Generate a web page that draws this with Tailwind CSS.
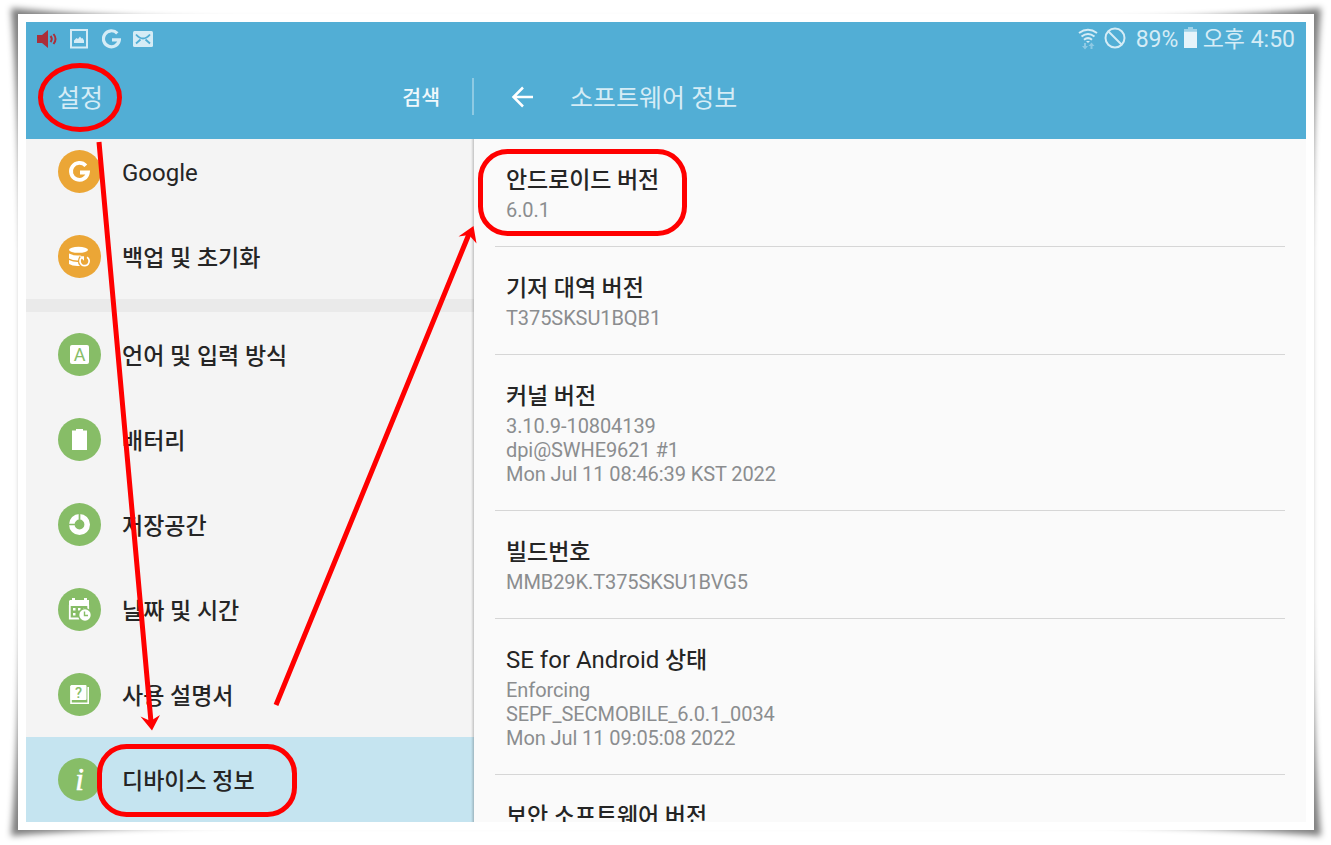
<!doctype html>
<html lang="ko">
    <head>
        <meta charset="UTF-8" />
        <meta name="viewport" content="width=device-width, initial-scale=1.0" />
        <title>소프트웨어 정보</title>
        <script src="https://cdn.jsdelivr.net/npm/@tailwindcss/browser@4"></script>
    </head>
    <body class="relative h-[845px] w-[1331px] overflow-hidden bg-white px-[18px] py-[14px] font-['Roboto','Noto_Sans_CJK_KR',sans-serif]">
        <!-- lifted corner shadow -->
        <svg class="absolute left-0 top-0" width="1331" height="845" viewBox="0 0 1331 845">
            <defs>
                <filter id="soft" x="-5%" y="-5%" width="110%" height="110%">
                    <feGaussianBlur stdDeviation="3.2" />
                </filter>
            </defs>
            <path
                d="M11 8Q100 17 240 20H1090Q1230 17 1321 8Q1313 110 1311 250V600Q1313 740 1321 836Q1230 828 1090 824H240Q100 828 11 836Q19 740 21 600V250Q19 110 11 8Z"
                fill="#000"
                fill-opacity="0.5"
                filter="url(#soft)"
            />
        </svg>

        <div class="relative h-[816px] w-[1296px] bg-white p-2">
            <div class="flex h-[800px] w-[1280px] flex-col overflow-hidden bg-[#fafafa]">
                <header class="h-[117px] shrink-0 bg-[#52aed5] text-[#d5ecf6]">
                    <!-- status bar -->
                    <div class="flex h-[33px] items-center justify-between pl-[10px] pr-[11px]">
                        <div class="flex items-center gap-3">
                            <svg width="22" height="20" viewBox="0 0 22 20">
                                <path d="M1 6h5l6-5v18l-6-5H1z" fill="#ab2f3a" />
                                <path d="M14.5 7q2.500 3 0 6M17.500 5q4 5 0 10" fill="none" stroke="#ab2f3a" stroke-width="2" />
                            </svg>
                            <svg width="18" height="20" viewBox="0 0 18 20">
                                <path d="M1 1h16v17.5H1z" fill="none" stroke="currentColor" stroke-width="2" />
                                <path d="M4 14v-2.500l2.500-2.500 1.500 1 2-2.500 1.500 2 1-.500L14 11.500V14z" fill="currentColor" />
                            </svg>
                            <svg class="ml-0.5" width="19" height="20" viewBox="0 0 19 20">
                                <path d="M15.300 4.300A8 8 0 1 0 17.400 10.800H10" fill="none" stroke="currentColor" stroke-width="3.200" />
                            </svg>
                            <svg width="20" height="16" viewBox="0 0 20 16">
                                <rect width="20" height="16" rx="1.5" fill="currentColor" />
                                <path d="M3 3.500Q10 11.500 17 3.500M3 12.500L7.500 8.500M17 12.500L12.500 8.500" fill="none" stroke="#52aed5" stroke-width="1.800" />
                            </svg>
                        </div>
                        <div class="flex items-center text-[23px] leading-none">
                            <svg width="20" height="22" viewBox="0 0 20 22">
                                <path d="M1 5Q10-1.500 19 5M3.500 8.500Q10 3.500 16.500 8.500M6 11.800Q10 8.500 14 11.800" fill="none" stroke="currentColor" stroke-width="2" />
                                <path d="M8 13h4l-2 2z" fill="currentColor" />
                                <path d="M6 15v3H4l3 3.500 3-3.500H8v-3zM12.500 21v-3h-2l3-3.500 3 3.500h-2v3z" fill="currentColor" opacity="0.45" />
                            </svg>
                            <svg class="mb-px ml-[6px]" width="22" height="22" viewBox="0 0 22 22">
                                <circle cx="11" cy="11" r="9.500" fill="none" stroke="currentColor" stroke-width="2" />
                                <path d="M4.500 4.500l13 13" stroke="currentColor" stroke-width="2" />
                            </svg>
                            <span class="ml-[10px] w-[42px] pt-0.5">89%</span>
                            <svg class="mb-[3px] ml-[6px]" width="13" height="21" viewBox="0 0 13 21">
                                <path d="M4 0h5v2h4v2.500H0V2h4z" fill="#9fd2e8" />
                                <path d="M0 4.500h13V21H0z" fill="#e6f4fa" />
                            </svg>
                            <span class="ml-[6px] pt-0.5">오후 4:50</span>
                        </div>
                    </div>
                    <!-- title bar -->
                    <div class="flex h-[83px] items-center">
                        <div class="flex w-[446px] items-center justify-between pl-[31px] pr-[32px]">
                            <span class="pt-1 text-[25px]">설정</span>
                            <span class="pt-[3px] text-[20.500px] font-medium text-[#f0f8fc]">검색</span>
                        </div>
                        <div class="h-[37px] w-[2px] bg-[#8ecae3]"></div>
                        <svg class="ml-[37px]" width="22" height="22" viewBox="0 0 22 22">
                            <path d="M12 1.500L2.500 11l9.500 9.500M2.500 11H22" fill="none" stroke="#fff" stroke-width="2.500" />
                        </svg>
                        <span class="ml-[37px] pt-1 text-[25px]">소프트웨어 정보</span>
                    </div>
                </header>

                <div class="flex h-[683px]">
                    <!-- settings list -->
                    <nav class="relative flex w-[448px] flex-col justify-end overflow-hidden bg-[#f4f4f4] text-[23px] text-[#252525]">
                        <div class="flex h-[85px] shrink-0 items-center gap-[21px] pl-8">
                            <svg width="43" height="43" viewBox="0 0 43 43">
                                <circle cx="21.5" cy="21.5" r="21.5" fill="#eba636" />
                                <path d="M27.800 15.700A8.500 8.500 0 1 0 29.900 22.500H22" fill="none" stroke="#fff" stroke-width="3.800" />
                            </svg>
                            <span class="pt-0.5 text-2xl">Google</span>
                        </div>
                        <div class="flex h-[85px] shrink-0 items-center gap-[21px] pl-8">
                            <svg width="43" height="43" viewBox="0 0 43 43">
                                <circle cx="21.5" cy="21.5" r="21.5" fill="#eba636" />
                                <ellipse cx="20.500" cy="14.800" rx="9.500" ry="3" fill="#fff" />
                                <path d="M11 18.500q4 2 8.500 2h9v5H19.500q-5 0-8.500-2zM11 25q4 2 8.500 2h3v4h-3q-5.500 0-8.500-2z" fill="#fff" />
                                <circle cx="26.500" cy="26" r="6.700" fill="#eba636" />
                                <path d="M23.500 22.700A4.600 4.600 0 1 0 29 22.200" fill="none" stroke="#fff" stroke-width="1.700" />
                                <path d="M21.500 21.200h4.500v4.500z" fill="#fff" />
                            </svg>
                            <span class="pt-[5px] font-medium">백업 및 초기화</span>
                        </div>
                        <div class="h-[13px] shrink-0 bg-[#eaeaea]"></div>
                        <div class="flex h-[85px] shrink-0 items-center gap-[21px] pl-8">
                            <svg width="43" height="43" viewBox="0 0 43 43">
                                <circle cx="21.5" cy="21.5" r="21.5" fill="#87bd67" />
                                <rect x="12" y="12" width="19" height="19" rx="2" fill="#fff" />
                                <text x="21.500" y="27.500" text-anchor="middle" font-size="18" fill="#87bd67">A</text>
                            </svg>
                            <span class="pt-[5px] font-medium">언어 및 입력 방식</span>
                        </div>
                        <div class="flex h-[85px] shrink-0 items-center gap-[21px] pl-8">
                            <svg width="43" height="43" viewBox="0 0 43 43">
                                <circle cx="21.5" cy="21.5" r="21.5" fill="#87bd67" />
                                <path d="M14 12.500h4V11h7v1.500h4V32H14z" fill="#fff" />
                            </svg>
                            <span class="pt-[5px] font-medium">배터리</span>
                        </div>
                        <div class="flex h-[85px] shrink-0 items-center gap-[21px] pl-8">
                            <svg width="43" height="43" viewBox="0 0 43 43">
                                <circle cx="21.5" cy="21.5" r="21.5" fill="#87bd67" />
                                <circle cx="21.500" cy="21.500" r="7.700" fill="none" stroke="#fff" stroke-width="5.600" />
                                <path d="M21.500 10v7.500M10 21.500h7.500" stroke="#87bd67" stroke-width="1.700" />
                            </svg>
                            <span class="pt-[5px] font-medium">저장공간</span>
                        </div>
                        <div class="flex h-[85px] shrink-0 items-center gap-[21px] pl-8">
                            <svg width="43" height="43" viewBox="0 0 43 43">
                                <circle cx="21.5" cy="21.5" r="21.5" fill="#87bd67" />
                                <path d="M12 12h2v-2h3v2h9v-2h3v2h2v6H11v-5z" fill="#fff" />
                                <path d="M11.800 17v13.500h9.500M30.200 17v5" fill="none" stroke="#fff" stroke-width="1.800" />
                                <path d="M15 20h2.500v2.500H15zM20 20h2.500v2.500H20zM25 20h2.500v1.500H25zM15 25h2.500v2.500H15z" fill="#fff" />
                                <circle cx="27" cy="27" r="7" fill="#87bd67" />
                                <circle cx="27" cy="27" r="5.700" fill="#fff" />
                                <path d="M26.500 23.500v4H30" fill="none" stroke="#87bd67" stroke-width="1.400" />
                            </svg>
                            <span class="pt-[5px] font-medium">날짜 및 시간</span>
                        </div>
                        <div class="flex h-[85px] shrink-0 items-center gap-[21px] pl-8">
                            <svg width="43" height="43" viewBox="0 0 43 43">
                                <circle cx="21.5" cy="21.5" r="21.5" fill="#87bd67" />
                                <rect x="12.500" y="12" width="16" height="15" rx="1" fill="#fff" />
                                <path d="M13 13v17.300h17.200V14" fill="none" stroke="#fff" stroke-width="1.600" />
                                <text x="20.500" y="24.800" text-anchor="middle" font-size="14.500" font-weight="500" fill="#87bd67">?</text>
                            </svg>
                            <span class="pt-[5px] font-medium">사용 설명서</span>
                        </div>
                        <div class="flex h-[85px] shrink-0 items-center gap-[21px] bg-[#c5e4f0] pl-8">
                            <svg width="43" height="43" viewBox="0 0 43 43">
                                <circle cx="21.5" cy="21.5" r="21.5" fill="#87bd67" />
                                <text x="21.500" y="31.500" text-anchor="middle" font-family="Liberation Serif" font-size="31" font-style="italic" fill="#fff" stroke="#fff" stroke-width="0.600">i</text>
                            </svg>
                            <span class="pt-[5px] font-medium">디바이스 정보</span>
                        </div>
                        <div class="absolute inset-y-0 right-0 w-[3px] bg-linear-to-r from-black/0 to-black/20"></div>
                    </nav>

                    <!-- software info -->
                    <main class="flex-1 overflow-hidden pl-[21px] pr-[21px] text-xl leading-6 tracking-[-0.08px] text-[#8b8d8f]">
                        <section class="border-b border-[#d6d6d6] pb-6 pl-[11px] pt-[26px]">
                            <h2 class="mb-px text-[23px] font-medium leading-8 text-[#252525]">안드로이드 버전</h2>
                            <p>6.0.1</p>
                        </section>
                        <section class="border-b border-[#d6d6d6] pb-6 pl-[11px] pt-[26px]">
                            <h2 class="mb-px text-[23px] font-medium leading-8 text-[#252525]">기저 대역 버전</h2>
                            <p>T375SKSU1BQB1</p>
                        </section>
                        <section class="border-b border-[#d6d6d6] pb-6 pl-[11px] pt-[26px]">
                            <h2 class="mb-px text-[23px] font-medium leading-8 text-[#252525]">커널 버전</h2>
                            <p>3.10.9-10804139</p>
                            <p>dpi@SWHE9621 #1</p>
                            <p>Mon Jul 11 08:46:39 KST 2022</p>
                        </section>
                        <section class="border-b border-[#d6d6d6] pb-6 pl-[11px] pt-[26px]">
                            <h2 class="mb-px text-[23px] font-medium leading-8 text-[#252525]">빌드번호</h2>
                            <p>MMB29K.T375SKSU1BVG5</p>
                        </section>
                        <section class="border-b border-[#d6d6d6] pb-6 pl-[11px] pt-[26px]">
                            <h2 class="mb-px h-8 text-[23px] font-medium leading-8 text-[#252525]"><span class="text-2xl font-normal leading-none tracking-normal">SE for Android</span> 상태</h2>
                            <p>Enforcing</p>
                            <p>SEPF_SECMOBILE_6.0.1_0034</p>
                            <p>Mon Jul 11 09:05:08 2022</p>
                        </section>
                        <section class="pl-[11px] pt-[26px]">
                            <h2 class="text-[23px] font-medium leading-8 text-[#252525]">보안 소프트웨어 버전</h2>
                        </section>
                    </main>
                </div>
            </div>
        </div>

        <!-- red annotations -->
        <svg class="absolute left-0 top-0" width="1331" height="845" viewBox="0 0 1331 845" fill="none" stroke="#f00" stroke-width="5">
            <ellipse cx="80" cy="97.500" rx="39.500" ry="32" />
            <rect x="480.500" y="151.500" width="204" height="82" rx="27" />
            <rect x="99.500" y="746.500" width="195" height="68" rx="27" />
            <path d="M99 142L151 722M276 705L469 234" />
            <path d="M152 730.500L140.500 716.500L150.500 721L160 715ZM473.500 226L458.500 236.500L469 235L476.500 243.500Z" fill="#f00" stroke="none" />
        </svg>
    </body>
</html>
